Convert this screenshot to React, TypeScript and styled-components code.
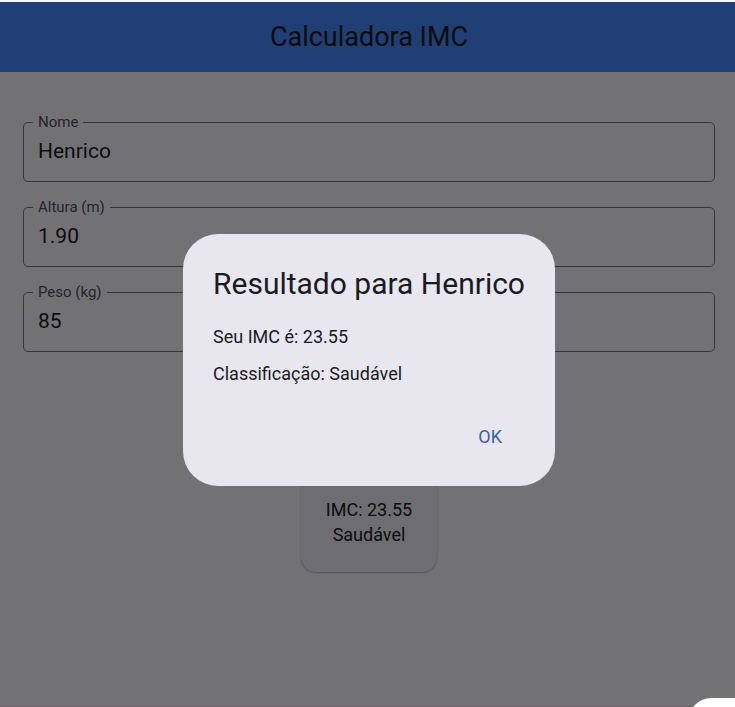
import React from "react";
import styled, { createGlobalStyle } from "styled-components";

const GlobalStyle = createGlobalStyle`
  *, *::before, *::after { box-sizing: border-box; }
  html, body, #root { height: 100%; }
  body {
    margin: 0;
    overflow: hidden;
    background: #fff;
    color: #1a1b20;
    font-family: Roboto, "Open Sans", sans-serif;
  }
`;

const Page = styled.div`
  position: relative;
  height: 100%;
  border-top: 2px solid #f4f4f6;
  border-bottom: 1px solid #6e676b;
  background: #f9f9ff;
`;

const AppBar = styled.header`
  display: flex;
  align-items: center;
  justify-content: center;
  height: 70px;
  padding-left: 3px;
  background: #448aff;
`;

const AppTitle = styled.h1`
  margin: 0;
  font-size: 27px;
  font-weight: 400;
  line-height: 36px;
`;

const Form = styled.main`
  display: flex;
  flex-direction: column;
  gap: 16px;
  padding: 41px 20px 0 23px;
`;

const Field = styled.fieldset`
  min-width: 0;
  margin: 0;
  padding: 0 9px;
  border: 1px solid #74777f;
  border-radius: 5px;
`;

const Legend = styled.legend`
  padding: 0 5px;
  color: #4c4f57;
  font-size: 15px;
  line-height: 18px;
`;

const Input = styled.input`
  display: block;
  width: 100%;
  height: 50px;
  padding: 0 5px 10px;
  border: 0;
  outline: 0;
  background: transparent;
  color: inherit;
  font: inherit;
  font-size: 21px;
`;

const ResultCard = styled.section`
  align-self: center;
  margin-top: 104px;
  padding: 25px;
  border-radius: 15px;
  background: #efedf6;
  box-shadow: 0 1px 2px rgba(0, 0, 0, 0.3);
  font-size: 18px;
  line-height: 25px;
  text-align: center;
`;

const Line = styled.p`
  margin: 0;
`;

const Scrim = styled.div`
  position: absolute;
  inset: 0;
  display: flex;
  align-items: center;
  justify-content: center;
  padding: 12px 0 0 3px;
  background: rgba(0, 0, 0, 0.54);
`;

const Dialog = styled.div`
  padding: 30px 30px 25px;
  border-radius: 35px;
  background: #e8e7f0;
`;

const DialogTitle = styled.h2`
  margin: 0 0 20px;
  font-size: 30px;
  font-weight: 400;
  line-height: 40px;
`;

const DialogBody = styled.div`
  display: flex;
  flex-direction: column;
  gap: 12px;
  font-size: 18px;
  line-height: 25px;
`;

const Actions = styled.div`
  display: flex;
  justify-content: flex-end;
  margin-top: 25px;
`;

const TextButton = styled.button`
  height: 50px;
  padding: 0 23px;
  border: 0;
  border-radius: 25px;
  background: transparent;
  color: #415f9e;
  font: inherit;
  font-size: 18px;
  cursor: pointer;
`;

const CornerClip = styled.div`
  position: absolute;
  right: 0;
  bottom: -1px;
  width: 46px;
  height: 9px;
  overflow: hidden;
`;

const CornerPanel = styled.div`
  height: 44px;
  border-top-left-radius: 22px;
  background: #fff;
`;

const fields = [
  { id: "nome", label: "Nome", value: "Henrico" },
  { id: "altura", label: "Altura (m)", value: "1.90" },
  { id: "peso", label: "Peso (kg)", value: "85" },
];

export default function App() {
  return (
    <>
      <GlobalStyle />
      <Page>
        <AppBar>
          <AppTitle>Calculadora IMC</AppTitle>
        </AppBar>
        <Form>
          {fields.map((field) => (
            <Field key={field.id}>
              <Legend>
                <label htmlFor={field.id}>{field.label}</label>
              </Legend>
              <Input id={field.id} defaultValue={field.value} />
            </Field>
          ))}
          <ResultCard>
            <Line>IMC: 23.55</Line>
            <Line>Saudável</Line>
          </ResultCard>
        </Form>
        <Scrim>
          <Dialog role="dialog" aria-modal="true" aria-labelledby="result-title">
            <DialogTitle id="result-title">Resultado para Henrico</DialogTitle>
            <DialogBody>
              <Line>Seu IMC é: 23.55</Line>
              <Line>Classificação: Saudável</Line>
            </DialogBody>
            <Actions>
              <TextButton type="button">OK</TextButton>
            </Actions>
          </Dialog>
        </Scrim>
        <CornerClip>
          <CornerPanel />
        </CornerClip>
      </Page>
    </>
  );
}
